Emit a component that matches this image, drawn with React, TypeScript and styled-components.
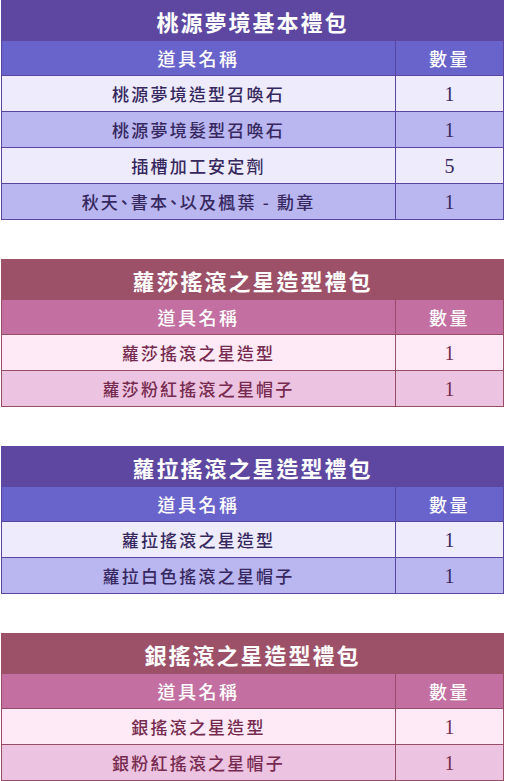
import React from 'react';
import styled, { createGlobalStyle } from 'styled-components';

const GlobalStyle = createGlobalStyle`
    html, body {
        margin: 0;
        padding: 0;
        background: #ffffff;
    }
    body {
        font-family: "Liberation Serif", "Noto Sans CJK TC", serif;
    }
`;

const themes = {
    purple: {
        title: '#5d47a1',
        head: '#6964cb',
        light: '#edebfc',
        alt: '#b9b6f0',
        border: '#5a45a0',
        text: '#36285e',
    },
    pink: {
        title: '#9c5169',
        head: '#c36fa1',
        light: '#fdeaf6',
        alt: '#ecc4e1',
        border: '#974d66',
        text: '#772a4f',
    },
};

const Page = styled.div`
    display: flex;
    flex-direction: column;
    gap: 39px;
    padding: 0 1px;
`;

const TableWrap = styled.table`
    width: 503px;
    border-collapse: collapse;
    border-spacing: 0;
    table-layout: fixed;
`;

const TitleCell = styled.th`
    height: 39px;
    padding: 0;
    line-height: 22px;
    background: ${(p) => p.color};
    border: 1px solid ${(p) => p.color};
    color: #ffffff;
    font-family: "Noto Sans CJK TC", sans-serif;
    font-size: 22px;
    font-weight: 700;
    letter-spacing: 2px;
    text-align: center;
`;

const HeadCell = styled.th`
    height: 34px;
    padding: 0;
    line-height: 20px;
    background: ${(p) => p.bg};
    border: 1px solid ${(p) => p.line};
    color: #ffffff;
    font-family: "Noto Sans CJK TC", sans-serif;
    font-size: 18px;
    font-weight: 500;
    letter-spacing: 2.5px;
    text-align: center;
`;

const BodyCell = styled.td`
    height: 35px;
    padding: 0;
    line-height: 20px;
    background: ${(p) => p.bg};
    border: 1px solid ${(p) => p.line};
    color: ${(p) => p.ink};
    font-family: "Noto Sans CJK TC", sans-serif;
    font-size: 17px;
    font-weight: 500;
    letter-spacing: 2.2px;
    font-feature-settings: "halt";
    text-align: center;
`;

const Count = styled.span`
    font-family: "Liberation Serif", serif;
    font-size: 20px;
    font-weight: 400;
    letter-spacing: 0;
`;

const packs = [
    {
        title: '桃源夢境基本禮包',
        theme: 'purple',
        rows: [
            ['桃源夢境造型召喚石', '1'],
            ['桃源夢境髮型召喚石', '1'],
            ['插槽加工安定劑', '5'],
            ['秋天、書本、以及楓葉 - 勳章', '1'],
        ],
    },
    {
        title: '蘿莎搖滾之星造型禮包',
        theme: 'pink',
        rows: [
            ['蘿莎搖滾之星造型', '1'],
            ['蘿莎粉紅搖滾之星帽子', '1'],
        ],
    },
    {
        title: '蘿拉搖滾之星造型禮包',
        theme: 'purple',
        rows: [
            ['蘿拉搖滾之星造型', '1'],
            ['蘿拉白色搖滾之星帽子', '1'],
        ],
    },
    {
        title: '銀搖滾之星造型禮包',
        theme: 'pink',
        rows: [
            ['銀搖滾之星造型', '1'],
            ['銀粉紅搖滾之星帽子', '1'],
        ],
    },
];

const PackTable = ({ title, theme, rows }) => {
    const t = themes[theme];
    return (
        <TableWrap>
            <colgroup>
                <col style={{ width: 394 }} />
                <col />
            </colgroup>
            <thead>
                <tr>
                    <TitleCell colSpan={2} color={t.title}>{title}</TitleCell>
                </tr>
                <tr>
                    <HeadCell bg={t.head} line={t.border}>道具名稱</HeadCell>
                    <HeadCell bg={t.head} line={t.border}>數量</HeadCell>
                </tr>
            </thead>
            <tbody>
                {rows.map(([name, qty], i) => {
                    const bg = i % 2 === 0 ? t.light : t.alt;
                    return (
                        <tr key={name}>
                            <BodyCell bg={bg} line={t.border} ink={t.text}>{name}</BodyCell>
                            <BodyCell bg={bg} line={t.border} ink={t.text}>
                                <Count>{qty}</Count>
                            </BodyCell>
                        </tr>
                    );
                })}
            </tbody>
        </TableWrap>
    );
};

export default function App() {
    return (
        <>
            <GlobalStyle />
            <Page>
                {packs.map((pack) => (
                    <PackTable key={pack.title} {...pack} />
                ))}
            </Page>
        </>
    );
}
